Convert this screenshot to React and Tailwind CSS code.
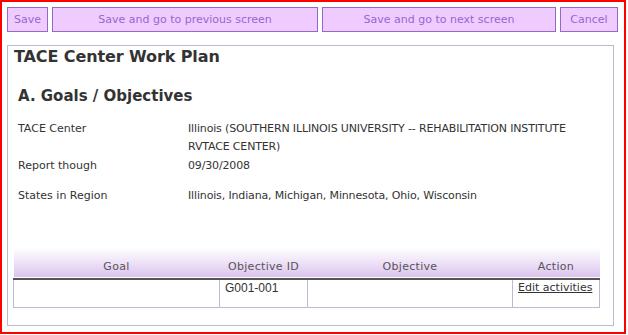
import React from 'react';

const font = { fontFamily: '"DejaVu Sans", Verdana, sans-serif' };

const Btn = ({ w, children }) => (
  <button
    className={`${w} h-[25px] bg-[#eeccff] border border-[#9966cc] text-[#9966cc] text-[11px] leading-none`}
  >
    {children}
  </button>
);

const InfoRow = ({ label, children, className = '' }) => (
  <div className={`flex ${className}`}>
    <div className="w-[170px] shrink-0">{label}</div>
    <div className="w-[405px] tracking-[-0.15px]">{children}</div>
  </div>
);

export default function App() {
  return (
    <div className="w-[628px] h-[335px] bg-white" style={font}>
      <div className="w-[626px] h-[334px] border-2 border-[#ff0000] pt-[5px] pl-[5px]">
        {/* Toolbar */}
        <div className="flex gap-1">
          <Btn w="w-[41px]">Save</Btn>
          <Btn w="w-[266px]">Save and go to previous screen</Btn>
          <Btn w="w-[234px]">Save and go to next screen</Btn>
          <Btn w="w-[58px]">Cancel</Btn>
        </div>

        {/* Work plan panel */}
        <div className="mt-[13px] w-[607px] h-[281px] border border-[#b8bcd0] text-[#333]">
          <h1 className="pl-[6px] text-[16px] font-bold leading-[20px] pt-[1px] tracking-[-0.1px]">TACE Center Work Plan</h1>
          <h2 className="pl-[10px] mt-[19px] text-[15px] font-bold leading-[20px]">A. Goals / Objectives</h2>

          <div className="pl-[10px] mt-[14px] text-[11px] leading-[18px]">
            <InfoRow label="TACE Center">
              Illinois (SOUTHERN ILLINOIS UNIVERSITY -- REHABILITATION INSTITUTE RVTACE CENTER)
            </InfoRow>
            <InfoRow label="Report though" className="mt-[1px]">09/30/2008</InfoRow>
            <InfoRow label="States in Region" className="mt-[12px]">
              Illinois, Indiana, Michigan, Minnesota, Ohio, Wisconsin
            </InfoRow>
          </div>

          {/* Goals table */}
          <table className="ml-[5px] mt-[43px] w-[587px] border-collapse text-[11px]">
            <thead>
              <tr className="h-[31px] bg-gradient-to-b from-white to-[#dcc4ee] border-b-2 border-[#555]">
                <th className="w-[206px] font-normal text-[#555] align-bottom pb-[3px] tracking-[0.3px]">Goal</th>
                <th className="w-[88px] font-normal text-[#555] align-bottom pb-[3px] tracking-[0.3px]">Objective ID</th>
                <th className="w-[205px] font-normal text-[#555] align-bottom pb-[3px] tracking-[0.3px]">Objective</th>
                <th className="font-normal text-[#555] align-bottom pb-[3px] tracking-[0.3px]">Action</th>
              </tr>
            </thead>
            <tbody>
              <tr className="h-[28px] align-top">
                <td className="border border-[#b8bcd0] border-t-0"></td>
                <td
                  className="border border-[#b8bcd0] border-t-0 px-[5px] pt-0 text-[12px] leading-[16px]"
                  style={{ fontFamily: '"Liberation Sans", Arial, sans-serif' }}
                >
                  G001-001
                </td>
                <td className="border border-[#b8bcd0] border-t-0"></td>
                <td className="border border-[#b8bcd0] border-t-0 px-[5px] pt-0 leading-[16px]">
                  <a href="#" className="underline text-[#333]">Edit activities</a>
                </td>
              </tr>
            </tbody>
          </table>
        </div>
      </div>
    </div>
  );
}
